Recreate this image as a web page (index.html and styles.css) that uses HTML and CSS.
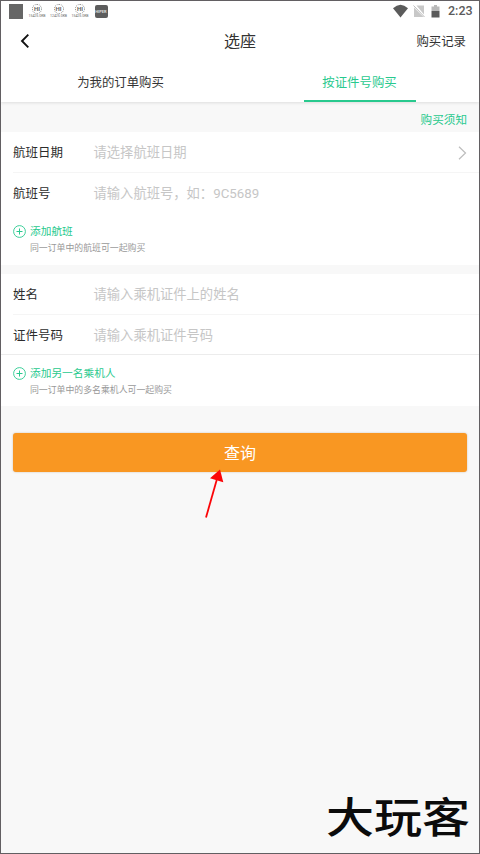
FILE: index.html
```html
<!DOCTYPE html>
<html lang="zh-CN">
<head>
<meta charset="utf-8">
<title>选座</title>
<link rel="stylesheet" href="styles.css">
</head>
<body>
<main class="screen">
  <div class="status">
    <span class="status-square"></span>
    <span class="notice-icon"><b>HI</b><small>15425.0KB</small></span>
    <span class="notice-icon"><b>HI</b><small>12425.0KB</small></span>
    <span class="notice-icon"><b>HI</b><small>15425.0KB</small></span>
    <span class="app-badge">HIPER</span>
    <svg class="system-icons" width="52" height="18" viewBox="0 0 52 18">
      <path d="M1 6.200Q8.500-.8 16 6.200L8.500 15.500z" fill="#5b5b5b"/>
      <path d="M24.500 3.500H32v9zM22 5.500v9.500h9.500z" fill="#c8c8c8"/>
      <path d="M21.500 3.500l11 11.500" stroke="#bcbcbc" stroke-width="1"/>
      <path d="M42 3h3v1.500h2.500V9h-8V4.500H42z" fill="#b9b9b9"/>
      <path d="M39.500 9h8v6.500h-8z" fill="#5b5b5b"/>
    </svg>
    <time class="clock">2:23</time>
  </div>
  <header class="header">
    <svg class="back" width="10" height="16" viewBox="0 0 10 16"><path d="M8.300 1.600L2 8l6.300 6.400" fill="none" stroke="#111" stroke-width="1.900"/></svg>
    <h1>选座</h1>
    <a class="records">购买记录</a>
  </header>
  <nav class="tabs">
    <a class="tab"><span>为我的订单购买</span></a>
    <a class="tab active"><span>按证件号购买</span></a>
  </nav>
  <div class="rules">购买须知</div>
  <section class="card">
    <div class="row"><label>航班日期</label><span class="hint">请选择航班日期</span>
      <svg class="chevron" width="9" height="14" viewBox="0 0 9 14"><path d="M1 .8L7.500 7 1 13.200" fill="none" stroke="#bdbdbd" stroke-width="1.200"/></svg>
    </div>
    <div class="row plain"><label>航班号</label><span class="hint">请输入航班号，如：9C5689</span></div>
    <div class="add">
      <svg width="13" height="13" viewBox="0 0 13 13" fill="none" stroke="#28c98e"><circle cx="6.500" cy="6.500" r="5.900" stroke-width=".9"/><path d="M3.500 6.500h6M6.500 3.500v6"/></svg>
      <div><strong>添加航班</strong><p>同一订单中的航班可一起购买</p></div>
    </div>
  </section>
  <section class="card passenger">
    <div class="row"><label>姓名</label><span class="hint">请输入乘机证件上的姓名</span></div>
    <div class="row full"><label>证件号码</label><span class="hint">请输入乘机证件号码</span></div>
    <div class="add">
      <svg width="13" height="13" viewBox="0 0 13 13" fill="none" stroke="#28c98e"><circle cx="6.500" cy="6.500" r="5.900" stroke-width=".9"/><path d="M3.500 6.500h6M6.500 3.500v6"/></svg>
      <div><strong>添加另一名乘机人</strong><p>同一订单中的多名乘机人可一起购买</p></div>
    </div>
  </section>
  <button class="search">查询</button>
  <svg class="arrow" width="24" height="54" viewBox="0 0 24 54"><path d="M3 52.500L13.700 15" stroke="#fb0508" stroke-width="1.800"/><path d="M17 4.500L7 13.300l13.300 3.900z" fill="#fb0508"/></svg>
  <div class="watermark">大玩客</div>
</main>
</body>
</html>
```
FILE: styles.css
```css
* { box-sizing: border-box; }
body {
  margin: 0;
  font-family: Roboto, "Noto Sans CJK SC", sans-serif;
  color: #333;
}
.screen {
  position: relative;
  width: 480px;
  height: 854px;
  overflow: hidden;
  border: 1px solid #625f62;
  background: #f8f8f8;
}
.status {
  display: flex;
  align-items: center;
  height: 20px;
  padding: 0 5px 0 8px;
  background: #fff;
}
.status-square { width: 14px; height: 15px; background: #666; }
.notice-icon {
  display: flex;
  flex-direction: column;
  align-items: center;
  width: 15px;
  margin-left: 6.500px;
  color: #666;
}
.notice-icon b {
  width: 10px;
  height: 10px;
  border: 1px dotted #888;
  border-radius: 50%;
  font-size: 6px;
  line-height: 8px;
  text-align: center;
}
.notice-icon small { font-size: 3.500px; line-height: 5px; }
.app-badge {
  width: 13px;
  height: 13px;
  margin-left: 7px;
  border-radius: 2px;
  background: #5d5d5d;
  color: #ddd;
  font-size: 4px;
  font-weight: 700;
  line-height: 13px;
  text-align: center;
}
.system-icons { margin-left: auto; }
.clock {
  width: 26px;
  margin-left: 4px;
  color: #5b5b5b;
  font-size: 12.500px;
  font-weight: 500;
  line-height: 20px;
  white-space: nowrap;
}
.header {
  position: relative;
  z-index: 1;
  display: grid;
  grid-template-columns: 1fr auto 1fr;
  align-items: center;
  height: 40px;
  padding: 0 13px 0 19px;
  background: #fff;
}
.header h1 { margin: 0; font-size: 16px; font-weight: 400; transform: translate(-3px, -1px); }
.records { justify-self: end; font-size: 12.400px; }
.tabs {
  display: grid;
  grid-template-columns: 1fr 1fr;
  height: 41px;
  background: #fff;
  box-shadow: 0 1px 3px #0000001c;
}
.tab {
  justify-self: center;
  width: 112px;
  line-height: 43px;
  font-size: 12.400px;
  text-align: center;
}
.active { height: 41px; border-bottom: 2px solid #28c98e; color: #28c98e; }
.rules {
  height: 30px;
  padding-right: 12px;
  color: #28c98e;
  font-size: 11.600px;
  line-height: 37px;
  text-align: right;
}
.card { height: 133px; background: #fff; }
.passenger { margin-top: 9px; height: 132px; }
.row {
  display: flex;
  align-items: center;
  height: 40.500px;
  margin-left: 12px;
  border-bottom: 1px solid #f5f5f5;
}
.row label { width: 80.500px; font-size: 12.500px; color: #2c2c2c; }
.hint { color: #c6c6c6; font-size: 13.300px; }
.chevron { margin: 2px 12px 0 auto; }
.plain { border-color: transparent; }
.full { margin-left: 0; padding-left: 12px; border-color: #ececec; }
.add {
  display: flex;
  gap: 4px;
  padding: 11.500px 0 0 12px;
}
.add div { line-height: 1; }
.add strong {
  display: block;
  color: #28c98e;
  font-size: 10.700px;
  font-weight: 400;
  line-height: 13px;
}
.add p { margin: 4px 0 0; color: #999; font-size: 8.900px; line-height: 12px; }
.search {
  display: block;
  width: 454px;
  height: 39px;
  margin: 27px 0 0 12px;
  padding: 0 0 2px;
  border: 0;
  border-radius: 3px;
  background: #f99722;
  box-shadow: 0 0 2px #9b7b5777;
  color: #fff;
  font: 16px Roboto, "Noto Sans CJK SC", sans-serif;
}
.arrow { position: absolute; left: 202px; top: 464px; }
.watermark {
  position: absolute;
  right: 9px;
  bottom: 14px;
  color: #0b0b0b;
  font: 500 48px/48px "Noto Sans CJK SC", sans-serif;
  transform: scaleY(.87);
}
```
